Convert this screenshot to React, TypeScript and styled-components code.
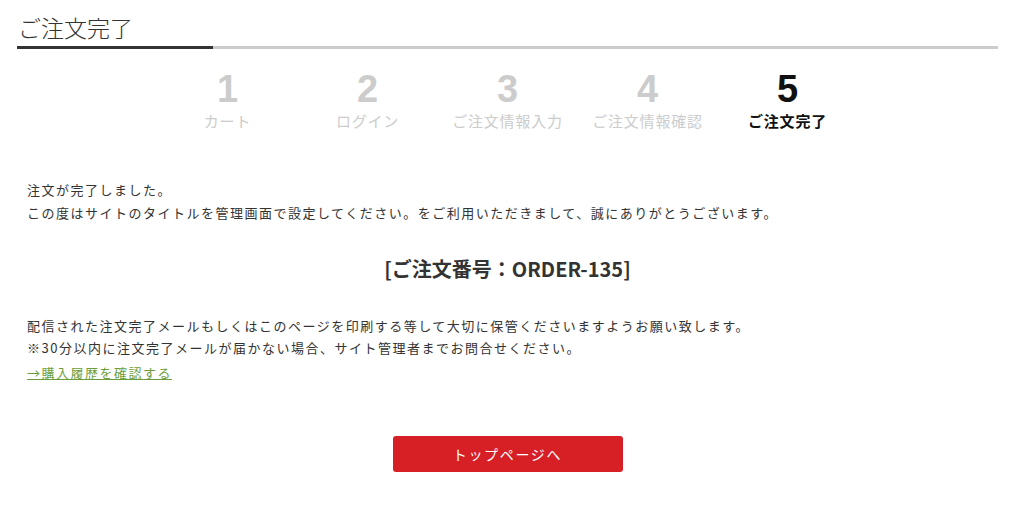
import styled, { createGlobalStyle } from "styled-components";

const GlobalStyle = createGlobalStyle`
  body {
    margin: 0;
    background: #fff;
    font-family: "Noto Sans CJK JP", "Noto Sans", sans-serif;
    color: #333;
  }
`;

const Page = styled.div`
  width: 981px;
  margin-left: 17px;
  padding-top: 8px;
`;

const Heading = styled.h1`
  margin: 0;
  font-size: 23px;
  font-weight: 300;
  line-height: 38px;
  padding-left: 1px;
  color: #333;
  border-bottom: 3px solid #ccc;
  position: relative;
  &::after {
    content: "";
    position: absolute;
    left: 0;
    bottom: -3px;
    width: 196px;
    height: 3px;
    background: #333;
  }
`;

const Steps = styled.ol`
  list-style: none;
  margin: 20px auto 0;
  padding: 0;
  display: flex;
  justify-content: center;
`;

const Step = styled.li<{ $active?: boolean }>`
  width: 140px;
  display: flex;
  flex-direction: column;
  align-items: center;
  color: ${(p) => (p.$active ? "#111" : "#ccc")};
`;

const StepNum = styled.span`
  font-family: "Liberation Sans", Arial, sans-serif;
  font-weight: 700;
  font-size: 38px;
  line-height: 40px;
`;

const StepLabel = styled.span<{ $active?: boolean }>`
  font-size: 15px;
  letter-spacing: 0.8px;
  line-height: 24px;
  font-weight: ${(p) => (p.$active ? 700 : 400)};
`;

const Body = styled.div`
  padding: 0 10px;
  margin-top: 45px;
`;

const Text = styled.p`
  margin: 0;
  font-size: 13px;
  letter-spacing: 1.5px;
  line-height: 23px;
  color: #333;
`;

const OrderNo = styled.p`
  margin: 28px 0 0;
  text-align: center;
  font-size: 20px;
  font-weight: 700;
  line-height: 34px;
  color: #333;
`;

const Notes = styled.div`
  margin-top: 29px;
  & > p {
    line-height: 22px;
  }
`;

const HistoryLink = styled.a`
  display: inline-block;
  margin-top: 2px;
  font-size: 13px;
  letter-spacing: 1.5px;
  line-height: 23px;
  color: #6b9e3a;
  text-decoration: underline;
`;

const ButtonRow = styled.div`
  display: flex;
  justify-content: center;
  margin-top: 52px;
`;

const TopButton = styled.button`
  width: 230px;
  height: 36px;
  border: none;
  border-radius: 3px;
  background: #d71f26;
  color: #fff;
  font-family: inherit;
  font-size: 14px;
  letter-spacing: 0.12em;
  cursor: pointer;
`;

const steps = ["カート", "ログイン", "ご注文情報入力", "ご注文情報確認", "ご注文完了"];

export default function App() {
  return (
    <>
      <GlobalStyle />
      <Page>
        <Heading>ご注文完了</Heading>
        <Steps>
          {steps.map((label, i) => {
            const active = i === steps.length - 1;
            return (
              <Step key={label} $active={active}>
                <StepNum>{i + 1}</StepNum>
                <StepLabel $active={active}>{label}</StepLabel>
              </Step>
            );
          })}
        </Steps>
        <Body>
          <Text>
            注文が完了しました。
            <br />
            この度はサイトのタイトルを管理画面で設定してください。をご利用いただきまして、誠にありがとうございます。
          </Text>
          <OrderNo>[ご注文番号：ORDER-135]</OrderNo>
          <Notes>
            <Text>
              配信された注文完了メールもしくはこのページを印刷する等して大切に保管くださいますようお願い致します。
              <br />
              ※30分以内に注文完了メールが届かない場合、サイト管理者までお問合せください。
            </Text>
            <HistoryLink href="#">→購入履歴を確認する</HistoryLink>
          </Notes>
          <ButtonRow>
            <TopButton>トップページへ</TopButton>
          </ButtonRow>
        </Body>
      </Page>
    </>
  );
}
